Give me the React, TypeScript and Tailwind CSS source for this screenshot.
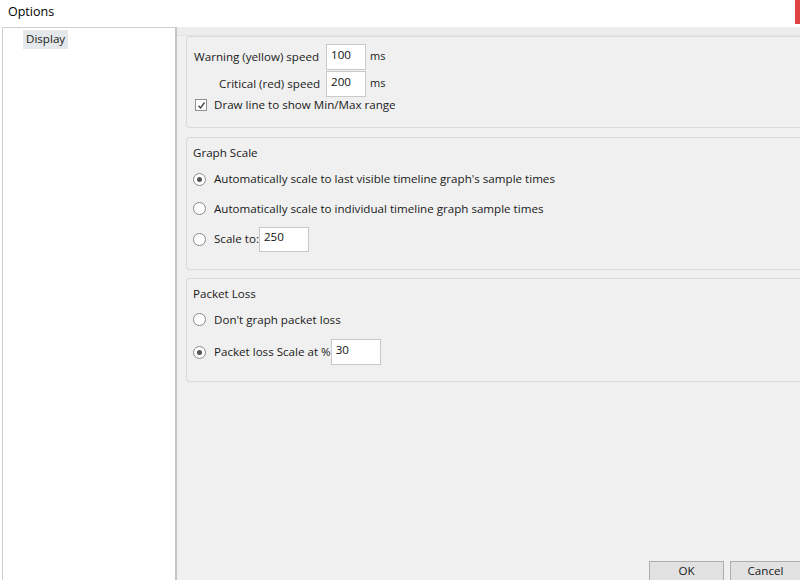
import React from 'react'

const font = { fontFamily: '"Open Sans", "Noto Sans", sans-serif' }

const Radio = ({ checked }: { checked?: boolean }) => (
    <span className="w-[13px] h-[13px] rounded-full border border-[#8a8a8a] bg-white flex items-center justify-center shrink-0">
        {checked && <span className="w-[5px] h-[5px] rounded-full bg-[#555]" />}
    </span>
)

const Field = ({ value, w, h }: { value: string; w: string; h: string }) => (
    <span className={`${w} ${h} bg-white border border-[#c9c9c9] flex items-center pl-[4px] pb-[4px] text-[#111]`}>
        {value}
    </span>
)

const Group = ({ children, h }: { children: React.ReactNode; h: string }) => (
    <div className={`ml-[9px] ${h} border border-[#dadada] border-r-0 rounded-l-[4px] bg-[#f0f0f0]`}>
        {children}
    </div>
)

export default function App() {
    return (
        <div className="w-[800px] h-[580px] bg-white text-[11.6px] text-[#1a1a1a] overflow-hidden flex flex-col" style={font}>
            <div className="h-[27px] shrink-0 flex items-start justify-between">
                <span className="pl-[8px] pt-[3px] text-[12.5px] text-black">Options</span>
                <span className="w-[5px] h-[24px] bg-[#e04545]" />
            </div>
            <div className="flex flex-1 min-h-0">
                <div className="w-[175px] ml-[2px] border-t border-l border-[#cfcfcf] border-r-2 border-r-[#c4c4c4] bg-white">
                    <div className="ml-[20px] mt-[2px] inline-block bg-[#e4e8ea] px-[3px] h-[19px] leading-[17px]">Display</div>
                </div>
                <div className="flex-1 flex flex-col bg-[#f0f0f0]">
                    <div className="h-[9px] bg-[#ececec] border-b border-[#e2e2e2]" />
                    <Group h="h-[92px]">
                        <div className="pl-[7px] pt-[6px] flex flex-col">
                            <div className="flex items-center h-[27px]">
                                <span className="w-[132px]">Warning (yellow) speed</span>
                                <Field value="100" w="w-[40px]" h="h-[26px]" />
                                <span className="ml-[4px] text-[11px]">ms</span>
                            </div>
                            <div className="flex items-center h-[27px]">
                                <span className="w-[132px] text-right pr-[6px]">Critical (red) speed</span>
                                <Field value="200" w="w-[40px]" h="h-[26px]" />
                                <span className="ml-[4px] text-[11px]">ms</span>
                            </div>
                            <div className="flex items-center gap-[7px] h-[16px] pl-[1px]">
                                <span className="w-[12px] h-[12px] border border-[#8f8f8f] bg-white flex items-center justify-center">
                                    <svg width="9" height="9" viewBox="0 0 9 9"><path d="M1.5 4.8 L3.5 7 L7.5 1.5" fill="none" stroke="#444" strokeWidth="1.3" /></svg>
                                </span>
                                <span>Draw line to show Min/Max range</span>
                            </div>
                        </div>
                    </Group>
                    <div className="h-[9px]" />
                    <Group h="h-[133px]">
                        <div className="pl-[6px] pt-[6px] flex flex-col">
                            <span className="h-[22px]">Graph Scale</span>
                            <div className="flex items-center gap-[8px] h-[26px]"><Radio checked /><span>Automatically scale to last visible timeline graph's sample times</span></div>
                            <div className="flex items-center gap-[8px] h-[33px]"><Radio /><span>Automatically scale to individual timeline graph sample times</span></div>
                            <div className="flex items-center gap-[8px] h-[28px]"><Radio /><span className="flex items-center">Scale to:<Field value="250" w="w-[50px]" h="h-[25px]" /></span></div>
                        </div>
                    </Group>
                    <div className="h-[8px]" />
                    <Group h="h-[104px]">
                        <div className="pl-[6px] pt-[6px] flex flex-col">
                            <span className="h-[22px]">Packet Loss</span>
                            <div className="flex items-center gap-[8px] h-[25px]"><Radio /><span>Don't graph packet loss</span></div>
                            <div className="flex items-center gap-[8px] h-[40px]"><Radio checked /><span className="flex items-center">Packet loss Scale at %<Field value="30" w="w-[50px]" h="h-[26px]" /></span></div>
                        </div>
                    </Group>
                    <div className="flex-1 flex items-end justify-end gap-[6px]">
                        <button className="w-[75px] h-[19px] border border-[#adadad] border-b-0 bg-[#e1e1e1] leading-[18px]">OK</button>
                        <button className="w-[70px] h-[19px] border border-[#adadad] border-b-0 border-r-0 bg-[#e1e1e1] leading-[18px]">Cancel</button>
                    </div>
                </div>
            </div>
        </div>
    )
}
